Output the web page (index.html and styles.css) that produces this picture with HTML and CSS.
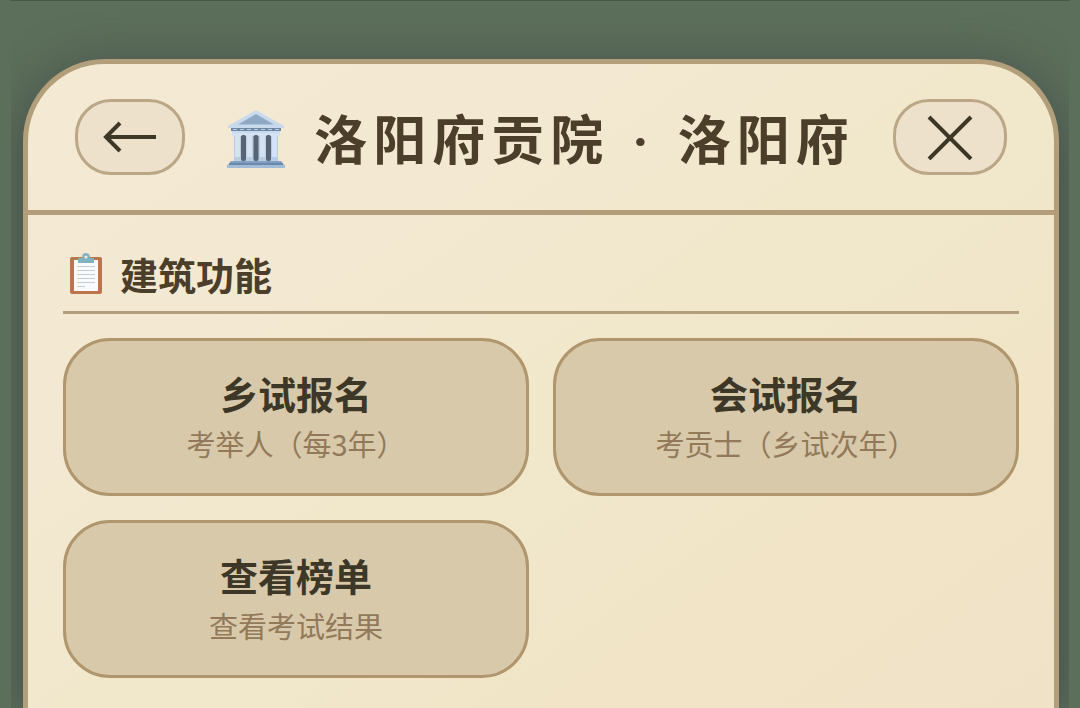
FILE: index.html
```html
<!DOCTYPE html>
<html lang="zh-CN">
<head>
  <meta charset="UTF-8" />
  <meta name="viewport" content="width=device-width, initial-scale=1" />
  <title>洛阳府贡院</title>
  <link rel="stylesheet" href="styles.css">
</head>
<body>
  <div class="overlay">
    <main class="modal">
      <header class="modal-header">
        <button class="icon-btn" type="button" aria-label="返回">
          <svg class="icon-back" viewBox="0 0 54 36">
            <path d="M53 18H3M17 4L3 18L17 32" />
          </svg>
        </button>
        <h1 class="modal-title">
          <svg class="icon-building" viewBox="0 -4 58 64" aria-hidden="true">
            <path fill="#c9daed" d="M29 1L57 17V19H53V24H5V19H1V17Z" />
            <path fill="#8fa9c4" d="M29 5L47 15.500H11Z" />
            <path fill="#6d86a3" d="M4 19H54V22H4Z" />
            <path stroke="#bed0e5" stroke-width="1" stroke-dasharray="4 3" d="M6 20.500H53" />
            <path fill="#b9cde4" d="M7 24H51V52H7Z" />
            <path fill="#d4e2f2" d="M5 24H53V27H5ZM8 27H13V48H8ZM20 27H25V48H20ZM33 27H38V48H33ZM45 27H50V48H45Z" />
            <rect fill="#566474" x="14" y="26" width="5" height="26" rx="2" />
            <rect fill="#566474" x="26.500" y="26" width="5" height="26" rx="2" />
            <rect fill="#566474" x="39" y="26" width="5" height="26" rx="2" />
            <path fill="#83a0c0" d="M4 52H54L57 56H1Z" />
            <path fill="#6889ab" d="M2 54H56V56H2Z" />
            <path fill="#a2bcd5" d="M0 56H58V59H0Z" />
          </svg>
          <span>洛阳府贡院<span class="title-dot"> · </span>洛阳府</span>
        </h1>
        <button class="icon-btn" type="button" aria-label="关闭">
          <svg class="icon-close" viewBox="0 0 58 46">
            <path d="M8 3L50 45M50 3L8 45" />
          </svg>
        </button>
      </header>

      <section class="section">
        <h2 class="section-title">
          <svg class="icon-clipboard" viewBox="0 0 34 42" aria-hidden="true">
            <rect fill="#bd744c" x="1" y="4" width="32" height="37" rx="2" />
            <path fill="#f8fafb" d="M5 7H29V38H5Z" />
            <path stroke="#c5cdd4" stroke-width="1" d="M8 13.500H26M8 17.500H26M8 21.500H26M8 25.500H26M8 29.500H26M8 33.500H16" />
            <path fill="#80b3c0" d="M9 5H13Q13 0 17 0Q21 0 21 5H25V10H9Z" />
            <circle fill="#f3e8d2" cx="17" cy="4" r="1.500" />
          </svg>
          <span>建筑功能</span>
        </h2>
        <div class="function-grid">
          <button class="function-card" type="button">
            <span class="card-name">乡试报名</span>
            <span class="card-desc">考举人（每3年）</span>
          </button>
          <button class="function-card" type="button">
            <span class="card-name">会试报名</span>
            <span class="card-desc">考贡士（乡试次年）</span>
          </button>
          <button class="function-card" type="button">
            <span class="card-name">查看榜单</span>
            <span class="card-desc">查看考试结果</span>
          </button>
        </div>
      </section>
    </main>
  </div>
</body>
</html>
```

FILE: styles.css
```css
:root {
  --green: #5c6f5a;
  --border: #b39e7b;
  --card-border: #b0966d;
  --text: #4b3e2a;
  --text-dark: #3d3727;
  --text-muted: #92795a;
}
* {
  box-sizing: border-box;
}
body {
  margin: 0;
  background: var(--green);
  color: var(--text);
  font-family: "Noto Sans CJK SC", sans-serif;
}
.overlay {
  display: flex;
  height: 100vh;
  margin: 0 11px;
  padding: 58px 10px 0 12px;
  border-top: 1px solid #465743;
  overflow: hidden;
}
.modal {
  flex: 1;
  min-width: 0;
  border: 5px solid var(--border);
  border-bottom: none;
  border-radius: 82px 82px 0 0;
  background: linear-gradient(145deg, #f4e9d3 0%, #f3e8d1 30%, #f1e8cb 54%, #f1e4c7 76%, #f0e2c6 100%);
  box-shadow: 0 10px 50px rgba(60, 65, 70, 0.8);
}
.modal-header {
  display: flex;
  align-items: center;
  justify-content: space-between;
  padding: 35px 47px;
  border-bottom: 5px solid var(--border);
}
.icon-btn {
  display: flex;
  align-items: center;
  justify-content: center;
  height: 76px;
  padding: 0 25px;
  border: 3px solid #bba685;
  border-radius: 36px;
  background: #eee1cc;
  cursor: pointer;
}
.icon-btn svg {
  fill: none;
  stroke: var(--text-dark);
  stroke-width: 4;
}
.icon-back {
  width: 54px;
  height: 36px;
}
.icon-close {
  width: 58px;
  height: 46px;
}
.modal-title {
  display: flex;
  align-items: center;
  gap: 29px;
  margin: 0;
  padding-left: 4px;
  font-size: 53px;
  line-height: 72px;
  letter-spacing: 6px;
  white-space: nowrap;
}
.title-dot {
  padding: 0 4px;
  font-family: Roboto, sans-serif;
  line-height: 1;
}
.icon-building {
  width: 58px;
  height: 64px;
}
.section {
  padding: 35px 35px;
}
.section-title {
  display: flex;
  align-items: center;
  gap: 17px;
  margin: 0 0 24px;
  padding: 0 6px 14px;
  border-bottom: 3px solid var(--border);
  font-size: 38px;
  line-height: 47px;
}
.icon-clipboard {
  width: 34px;
  height: 42px;
}
.function-grid {
  display: grid;
  grid-template-columns: 1fr 1fr;
  gap: 24px;
}
.function-card {
  display: flex;
  flex-direction: column;
  align-items: center;
  padding: 26px 24px;
  border: 3px solid var(--card-border);
  border-radius: 47px;
  background: #d8c9ab;
  color: var(--text-dark);
  font-family: inherit;
  cursor: pointer;
}
.card-name {
  font-size: 38px;
  font-weight: bold;
  line-height: 52px;
}
.card-desc {
  color: var(--text-muted);
  font-size: 29px;
  line-height: 48px;
}
```
